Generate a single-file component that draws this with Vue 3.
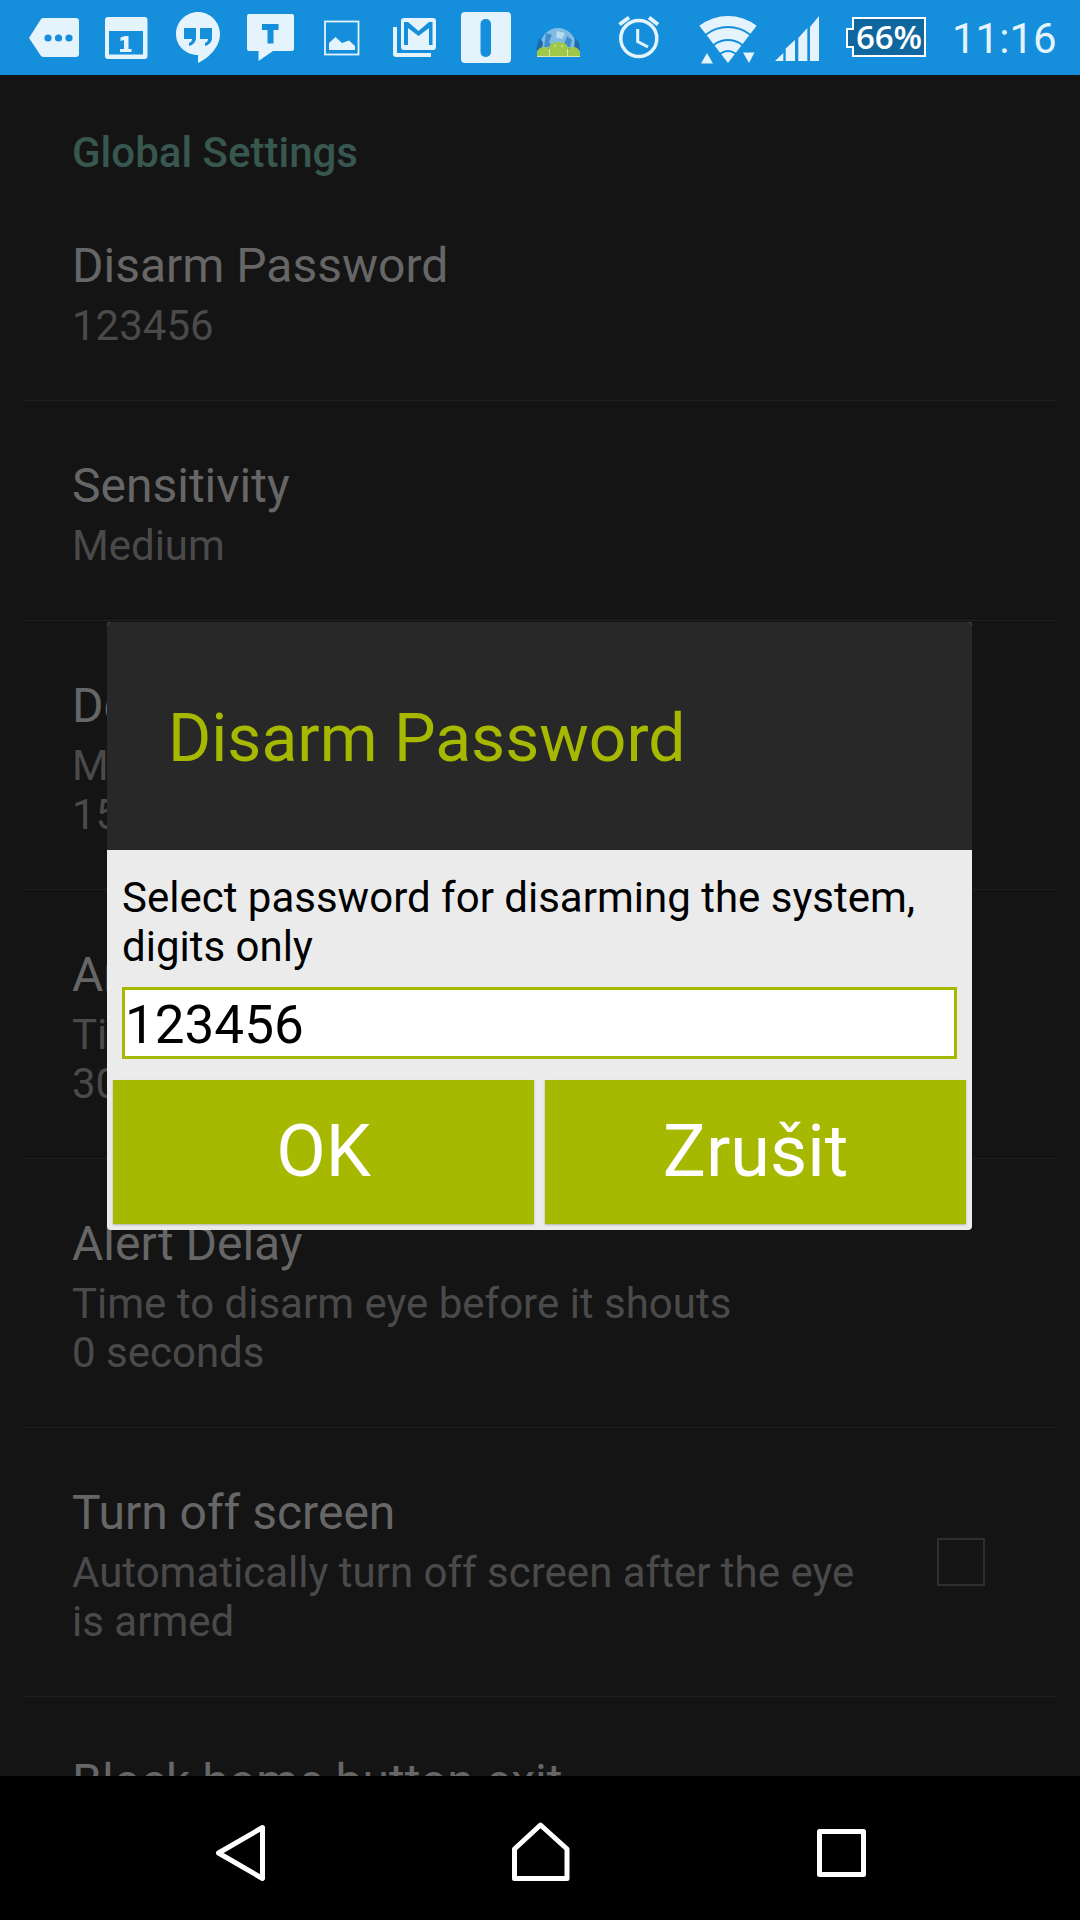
<template>
  <div class="screen">
    <!-- Status bar -->
    <div class="status-bar">
      <svg viewBox="29 0 76 75" width="76" height="75">
        <path class="ico" d="M29 38 L41 19 Q42 18 44 18 H76 Q79 18 79 21 V54 Q79 57 76 57 H44 Q42 57 41 56 Z" />
        <circle class="cut" cx="48" cy="38" r="3.6" />
        <circle class="cut" cx="58.500" cy="38" r="3.600" />
        <circle class="cut" cx="69" cy="38" r="3.600" />
      </svg>
      <svg viewBox="105 0 71 75" width="71" height="75">
        <rect class="ico" x="105" y="17" width="42.500" height="42" rx="3" />
        <rect class="cut" x="109" y="31" width="34" height="23.500" />
        <path class="ico" d="M120.500 37.500 L125 36 H128.500 V49 H131.500 V52 H120 V49 H124 V40 L120.500 41 Z" />
      </svg>
      <svg viewBox="176 0 71 75" width="71" height="75">
        <path class="ico" d="M198 12 C186 12 176 22 176 34 C176 46 186 55 198 55 V63 C209 58 220 47 220 34 C220 22 210 12 198 12 Z" />
        <path class="cut" d="M184 28 H196 V38 C196 42 193 45 189 46 V43 C191 42 192 41 192 39 H184 Z" />
        <path class="cut" d="M200 28 H212 V38 C212 42 209 45 205 46 V43 C207 42 208 41 208 39 H200 Z" />
      </svg>
      <svg viewBox="247 0 77 75" width="77" height="75">
        <path class="ico" d="M249 14 H292 Q294 14 294 16 V49 Q294 51 292 51 H273 L258.500 61 V51 H249 Q247 51 247 49 V16 Q247 14 249 14 Z" />
        <path class="cut" d="M262 24 H278.500 V30 H273.500 V43.500 H267.500 V30 H262 Z" />
      </svg>
      <svg viewBox="324 0 69 75" width="69" height="75">
        <rect class="ico-line" x="325" y="21.500" width="33.500" height="33" stroke-width="1.800" />
        <path class="ico" d="M329 50 V43 L335.500 37 L342 43 L349 40.500 L355 46 V50 Z" />
      </svg>
      <svg viewBox="393 0 68 75" width="68" height="75">
        <path class="ico" d="M393 27 H397 V53 H431 V57 H396 Q393 57 393 54 Z" />
        <rect class="ico" x="401" y="18" width="35" height="32" rx="3" />
        <path class="cut" d="M404 22 H408 L418.500 31 L429 22 H432.500 V45 H429 V28 L418.500 36 L408 28 V45 H404 Z" />
      </svg>
      <svg viewBox="461 0 72 75" width="72" height="75">
        <rect class="ico" x="461" y="12" width="50" height="51" rx="4" />
        <rect class="cut" x="480.500" y="19" width="10.500" height="38" rx="5" />
      </svg>
      <svg viewBox="533 0 85 75" width="85" height="75">
        <path fill="#7fbbe3" d="M540 48 C540 36 548 28 558 28 C568 28 576 36 577 48 Z" />
        <path fill="#3f8ecb" d="M546 33 L552 35 L549 42 L553 47 H544 Z" />
        <path fill="#b9daf0" d="M557 31 L565 33 L562 39 L556 37 Z" />
        <path fill="#3f8ecb" d="M567 36 L572 40 L570 47 H563 Z" />
        <path fill="#1b68ab" d="M539 38 L543 42 L542 50 H536 Z" />
        <path fill="#1b68ab" d="M575 38 L579 43 L580 50 H574 Z" />
        <path fill="#a0c64a" d="M537 57 V52 Q539 47 544 47 Q548 47 549 49 V47 Q551 42 558.500 42 Q566 42 568 47 V49 Q570 47 573 47 Q578 47 580 52 V57 Z" />
        <path class="android-line" d="M549.500 49 V56 M567.500 49 V56 M537 56.500 H580" />
        <circle fill="#f0f6dc" cx="555" cy="46" r="0.800" />
        <circle fill="#f0f6dc" cx="562" cy="46" r="0.800" />
      </svg>
      <svg viewBox="618 0 81 75" width="81" height="75">
        <circle class="ico-line" cx="638.800" cy="38.500" r="18" stroke-width="3.500" />
        <path class="ico-line" d="M637.700 29 V41.500 L648 47" stroke-width="3" />
        <path class="ico-line" d="M619.500 24.500 L629 17.500 M649 17.500 L658 24.500" stroke-width="4" />
      </svg>
      <svg viewBox="699 0 75 75" width="75" height="75">
        <path class="ico" d="M699.400 25.700 A47 47 0 0 1 756.600 25.700 L750.500 33.700 A37 37 0 0 0 705.500 33.700 Z" />
        <path class="ico" d="M706.700 35.200 A35 35 0 0 1 749.300 35.200 L742.600 44 A24 24 0 0 0 713.400 44 Z" />
        <path class="ico" d="M714.600 45.600 A22 22 0 0 1 741.400 45.600 L735.900 52.700 A13 13 0 0 0 720.100 52.700 Z" />
        <path class="ico" d="M721.300 54.300 A11 11 0 0 1 734.700 54.300 L728 63 Z" />
        <path class="ico" d="M701 63.500 L707 53 L713 63.500 Z" />
        <path class="ico" d="M743 52.500 H754.500 L749 63 Z" />
      </svg>
      <svg viewBox="774 0 72 75" width="72" height="75">
        <path class="ico" d="M775 61 L783.300 53 V61 Z" />
        <path class="ico" d="M785.700 48.500 L795 40 V61 H785.700 Z" />
        <path class="ico" d="M798.300 38 L807.300 28 V61 H798.300 Z" />
        <path class="ico" d="M810 27 L819 16 V61 H810 Z" />
      </svg>
      <svg viewBox="846 0 106 75" width="106" height="75">
        <path fill="#10679f" stroke="#ffffff" stroke-width="2" d="M853 18 H925 V56 H853 V47 H847 V29 H853 Z" />
        <text class="batt" x="889" y="49" text-anchor="middle">66%</text>
      </svg>
      <span class="clock">11:16</span>
    </div>

    <!-- Settings list -->
    <div class="content">
      <div class="section-title">Global Settings</div>
      <div v-for="row in rows" :key="row.title" class="row" :class="{ 'row--short': row.lines.length === 1 }">
        <div class="row__text">
          <div class="row__title">{{ row.title }}</div>
          <div v-for="line in row.lines" :key="line" class="row__line">{{ line }}</div>
        </div>
        <div v-if="row.check" class="row__check"></div>
      </div>

      <!-- Dialog -->
      <div class="overlay">
        <div class="dialog">
          <div class="dialog__header">Disarm Password</div>
          <div class="dialog__body">
            <div class="dialog__msg">Select password for disarming the system, digits only</div>
            <div class="dialog__input">123456</div>
            <div class="dialog__buttons">
              <button class="dialog__btn">OK</button>
              <button class="dialog__btn">Zrušit</button>
            </div>
          </div>
        </div>
      </div>
    </div>

    <!-- Navigation bar -->
    <div class="nav-bar">
      <svg width="52" height="62" viewBox="214 1821 52 62">
        <path class="nav-ico" d="M262.500 1827.500 L218.500 1853 L262.500 1878.500 Z" />
      </svg>
      <svg width="60" height="62" viewBox="510 1821 60 62">
        <path class="nav-ico" d="M540.500 1825 L514.500 1849 V1878.500 H567 V1849 Z" />
      </svg>
      <svg width="50" height="62" viewBox="817 1821 50 62">
        <rect class="nav-ico" x="819.500" y="1831.500" width="44" height="43" />
      </svg>
    </div>
  </div>
</template>

<script setup>
const rows = [
  { title: "Disarm Password", lines: ["123456"] },
  { title: "Sensitivity", lines: ["Medium"] },
  { title: "Detection Delay", lines: ["Minimum time between detections", "15 seconds"] },
  { title: "Arming Delay", lines: ["Time to leave before the eye is armed", "30 seconds"] },
  { title: "Alert Delay", lines: ["Time to disarm eye before it shouts", "0 seconds"] },
  {
    title: "Turn off screen",
    lines: ["Automatically turn off screen after the eye", "is armed"],
    check: true,
  },
  { title: "Block home button exit", lines: ["Prevent leaving by the home button"] },
];
</script>

<style>
html,
body {
  margin: 0;
  background: #141414;
}
</style>

<style scoped>
.screen {
  width: 1080px;
  height: 1920px;
  display: flex;
  flex-direction: column;
  overflow: hidden;
  font-family: Roboto, "Liberation Sans", sans-serif;
  background: #141414;
}

/* Status bar */
.status-bar {
  height: 75px;
  flex-shrink: 0;
  display: flex;
  padding-left: 29px;
  background: #158fdb;
}

.status-bar svg {
  display: block;
  flex-shrink: 0;
}

.ico {
  fill: #e4f3fc;
}

.cut {
  fill: #158fdb;
}

.ico-line {
  fill: none;
  stroke: #e4f3fc;
}

.android-line {
  fill: none;
  stroke: #e6f0c8;
  stroke-width: 0.800;
}

.batt {
  font-family: "Open Sans", sans-serif;
  font-size: 33px;
  font-weight: 600;
  fill: #ffffff;
}

.clock {
  font-size: 42px;
  line-height: 78px;
  color: #e4f3fc;
}

/* List */
.content {
  position: relative;
  flex: 1;
  min-height: 0;
  overflow: hidden;
}

.section-title {
  height: 106px;
  box-sizing: border-box;
  padding: 50px 72px 0;
  font-size: 42px;
  font-weight: 500;
  line-height: 56px;
  color: #37574f;
}

.row {
  height: 269px;
  margin: 0 24px;
  padding: 0 48px;
  box-sizing: border-box;
  display: flex;
  align-items: center;
  justify-content: space-between;
  border-bottom: 1px solid #202020;
}

.row--short {
  height: 220px;
}

.row__title {
  font-size: 48px;
  line-height: 70px;
  white-space: nowrap;
  color: #666666;
}

.row__line {
  font-size: 42px;
  line-height: 49px;
  white-space: nowrap;
  color: #4a4a4a;
}

.row__check {
  width: 44px;
  height: 44px;
  margin-right: 23px;
  border: 2px solid #2e2e2e;
}

/* Dialog */
.overlay {
  position: absolute;
  top: 0;
  right: 0;
  bottom: 0;
  left: 0;
  display: flex;
  align-items: center;
  justify-content: center;
}

.dialog {
  width: 865px;
  margin-right: 1px;
  border-radius: 4px;
  overflow: hidden;
  background: #ebebeb;
}

.dialog__header {
  height: 228px;
  padding-left: 61px;
  font-size: 66px;
  line-height: 233px;
  color: #a6b800;
  background: #282828;
}

.dialog__body {
  padding: 0 6px 6px;
}

.dialog__msg {
  padding: 23px 9px 0;
  font-size: 42px;
  line-height: 49px;
  color: #000000;
}

.dialog__input {
  height: 66px;
  margin: 16px 9px 0;
  border: 3px solid #a6b800;
  font-size: 53px;
  line-height: 70px;
  color: #000000;
  background: #ffffff;
}

.dialog__buttons {
  display: flex;
  gap: 11px;
  margin-top: 21px;
}

.dialog__btn {
  flex: 1;
  height: 144px;
  padding: 0;
  border: none;
  font-family: inherit;
  font-size: 72px;
  color: #ffffff;
  background: #a6b800;
  box-shadow: 0 1px 2px rgba(0, 0, 0, 0.25);
}

/* Navigation bar */
.nav-bar {
  height: 144px;
  flex-shrink: 0;
  box-sizing: border-box;
  display: flex;
  align-items: flex-start;
  padding: 45px 0 0 214px;
  background: #000000;
}

.nav-bar svg {
  display: block;
  flex-shrink: 0;
}

.nav-bar svg:nth-child(2) {
  margin-left: 244px;
}

.nav-bar svg:nth-child(3) {
  margin-left: 247px;
}

.nav-ico {
  fill: none;
  stroke: #ffffff;
  stroke-width: 5;
  stroke-linejoin: round;
}
</style>
